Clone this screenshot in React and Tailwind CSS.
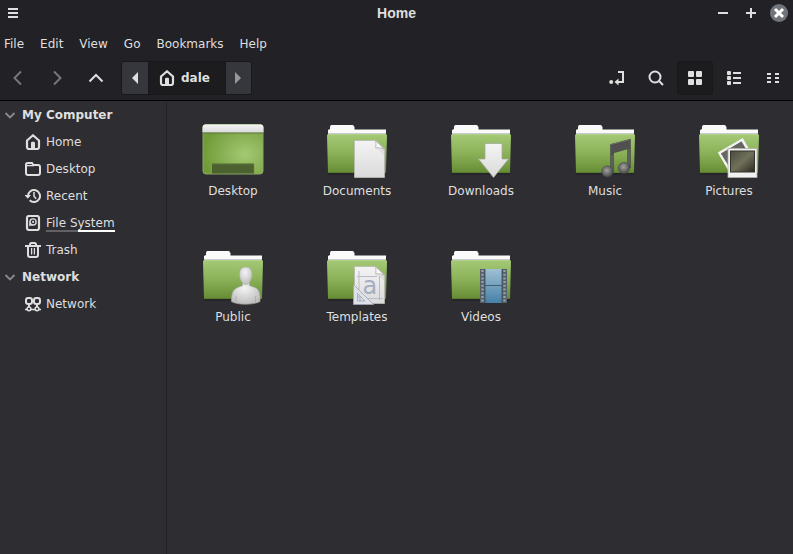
import React, { useState } from "react";

function Icon({ children, className = "size-4" }) {
  return (
    <svg viewBox="0 0 16 16" className={className} fill="none" stroke="currentColor" strokeWidth="2" aria-hidden="true">
      {children}
    </svg>
  );
}

const HomeIcon = () => (
  <Icon>
    <path d="M2 6.500 8 1.200l6 5.300V13a2 2 0 0 1-2 2H4a2 2 0 0 1-2-2z" strokeWidth="2.200" strokeLinejoin="round" />
    <path d="M6 15V9a1.200 1.200 0 0 1 1.200-1.200h1.600A1.200 1.200 0 0 1 10 9v6z" fill="currentColor" stroke="none" />
  </Icon>
);

const FolderIcon = () => (
  <Icon>
    <path d="M1 12V3.500A1.500 1.500 0 0 1 2.500 2H7l1.500 2H13a2 2 0 0 1 2 2v6a2 2 0 0 1-2 2H3a2 2 0 0 1-2-2z" strokeWidth="2" />
    <path d="M1 4.600h8" strokeWidth="1.400" />
  </Icon>
);

const RecentIcon = () => (
  <Icon>
    <path d="M3 8a6 6 0 1 1 1.700 4.200" />
    <path d="M-.5 7h6.500L2.800 10.800z" fill="currentColor" stroke="none" />
    <path d="M9 4v4.300l2.200 2.500" strokeWidth="1.500" />
  </Icon>
);

const DiskIcon = () => (
  <Icon>
    <rect x="2" y="1" width="12" height="14" rx="2" strokeWidth="2.200" />
    <path d="M4.200 11.400V7A3.800 3.800 0 1 1 8 10.800H5z" fill="currentColor" stroke="none" />
    <circle cx="8.100" cy="6.900" r="1.700" stroke="#2e2d32" strokeWidth="1.300" fill="currentColor" />
  </Icon>
);

const TrashIcon = () => (
  <Icon>
    <path d="M0 4h16M5 3.500V2.500A1.500 1.500 0 0 1 6.500 1h3A1.500 1.500 0 0 1 11 2.500v1" />
    <path d="M3 4v9a2 2 0 0 0 2 2h6a2 2 0 0 0 2-2V4" />
    <path d="M6.600 6v6.500M9.400 6v6.500" strokeWidth="1.300" />
  </Icon>
);

const NetworkIcon = () => (
  <Icon>
    <rect x="1" y="2" width="6" height="6" rx="2.200" />
    <rect x="9" y="2" width="6" height="6" rx="2.200" />
    <path d="M4 8v3M12 8v3" />
    <path d="M0 13.500h2.500M6 13.500h4M13.500 13.500H16" strokeWidth="1.600" />
    <circle cx="4" cy="12.800" r="1.900" strokeWidth="1.500" />
    <circle cx="12" cy="12.800" r="1.900" strokeWidth="1.500" />
  </Icon>
);

const LocationIcon = () => (
  <Icon>
    <path d="M9 2h5v10H8" />
    <path d="m5.500 12 4-3.500v7z" fill="currentColor" stroke="none" />
    <circle cx="2.200" cy="12" r="2" fill="currentColor" stroke="none" />
  </Icon>
);

const SearchIcon = () => (
  <Icon>
    <circle cx="7" cy="7" r="5.500" />
    <path d="m11 11 4 4" />
  </Icon>
);

const GridIcon = () => (
  <Icon>
    <g fill="currentColor" stroke="none">
      <rect x="1" y="1" width="6" height="6" rx="1" />
      <rect x="9" y="1" width="6" height="6" rx="1" />
      <rect x="1" y="9" width="6" height="6" rx="1" />
      <rect x="9" y="9" width="6" height="6" rx="1" />
    </g>
  </Icon>
);

const ListIcon = () => (
  <Icon>
    <g fill="currentColor" stroke="none">
      <rect x="1" y="1" width="4" height="4" rx="1" />
      <rect x="1" y="6" width="4" height="4" rx="1" />
      <rect x="1" y="11" width="4" height="4" rx="1" />
    </g>
    <path d="M7 3h8M7 8h8M7 13h8" />
  </Icon>
);

const CompactIcon = () => (
  <Icon>
    <path d="M2 4h4M2 8h4M2 12h4M10 4h4M10 8h4M10 12h4" />
  </Icon>
);

function Gradients() {
  return (
    <svg className="absolute size-0" aria-hidden="true">
      <defs>
        <linearGradient id="green" x1="0" y1="0" x2="0" y2="1">
          <stop offset="0" stopColor="#a5c976" />
          <stop offset="0.500" stopColor="#8bb158" />
          <stop offset="1" stopColor="#658c34" />
        </linearGradient>
        <radialGradient id="desk" cx="0.700" cy="0.600" r="0.700">
          <stop offset="0" stopColor="#a4c974" />
          <stop offset="1" stopColor="#719b38" />
        </radialGradient>
        <linearGradient id="paper" x1="0" y1="0" x2="0" y2="1">
          <stop offset="0" stopColor="#f4f4f4" />
          <stop offset="1" stopColor="#dadada" />
        </linearGradient>
        <linearGradient id="photo" x1="0" y1="0" x2="1" y2="1">
          <stop offset="0" stopColor="#4b4a3f" />
          <stop offset="0.500" stopColor="#70715a" />
          <stop offset="1" stopColor="#2c2720" />
        </linearGradient>
        <linearGradient id="film" x1="0" y1="0" x2="0" y2="1">
          <stop offset="0" stopColor="#a0c0d4" />
          <stop offset="1" stopColor="#4680a6" />
        </linearGradient>
        <radialGradient id="note" cx="0.450" cy="0.400" r="0.600">
          <stop offset="0" stopColor="#a2a2a2" />
          <stop offset="1" stopColor="#484848" />
        </radialGradient>
        <radialGradient id="person" cx="0.450" cy="0.300" r="0.800">
          <stop offset="0" stopColor="#f4f4f4" />
          <stop offset="1" stopColor="#b5b5b5" />
        </radialGradient>
      </defs>
    </svg>
  );
}

function BigIcon({ children }) {
  return (
    <svg viewBox="0 0 64 64" className="size-16" aria-hidden="true">
      {children}
    </svg>
  );
}

function DesktopArt() {
  return (
    <BigIcon>
      <rect x="2" y="5.500" width="60" height="49.500" rx="3" fill="url(#desk)" stroke="#8aa864" />
      <path d="M1.500 13.500V8.500a3 3 0 0 1 3-3h55a3 3 0 0 1 3 3v5z" fill="url(#paper)" />
      <path d="M1.500 14h61" stroke="#55653e" strokeOpacity="0.700" />
      <path d="M11 44.500h42V54.500H11z" fill="#4b6130" />
      <path d="M11 45h42V54.500" fill="none" stroke="#6f8c49" strokeOpacity="0.500" />
    </BigIcon>
  );
}

function FolderArt({ children }) {
  return (
    <BigIcon>
      <path d="M3 55h58" stroke="#1c1c1e" strokeOpacity="0.500" strokeWidth="1.500" />
      <path d="M3 16v-5l2-1V7.500L6 6h22l1.500 2v2.500H61V16z" fill="#fafafa" />
      <path d="M3 14.500h58" stroke="#c9c9cf" strokeWidth="1" />
      <path d="M2 16.500q0-1.500 1.500-1.500h57q1.500 0 1.500 1.500L61 53.200a.8.8 0 0 1-.8.8H3.800A.8.8 0 0 1 3 53.200z" fill="url(#green)" />
      <path d="M3 15.700h58" stroke="#bcd996" strokeOpacity="0.600" />
      <path d="M3.500 53.500h57" stroke="#587b2e" />
      {children}
    </BigIcon>
  );
}

const Paper = () => (
  <>
    <path d="M29.500 21.500H51L59.500 30v28.500h-30z" fill="url(#paper)" stroke="#b9b9b4" strokeWidth="0.800" />
    <path d="M50 29.500h9.500V38q-2-6-9.500-8.500z" fill="#cfcfcf" fillOpacity="0.500" />
    <path d="M50.500 21.500q1 3 .2 7.300 5-.6 8.800 1.400z" fill="#fbfbfb" stroke="#a9a9a4" strokeWidth="0.800" />
  </>
);

const DocumentsArt = () => (
  <FolderArt>
    <Paper />
  </FolderArt>
);

const DownloadsArt = () => (
  <FolderArt>
    <path d="M36 24.500h17V40h6.500L44.500 58.500 29.500 40H36z" fill="url(#paper)" stroke="#a6aa9c" strokeWidth="0.800" />
  </FolderArt>
);

const MusicArt = () => (
  <FolderArt>
    <path d="M39 53V26.500L56 22v27" fill="none" stroke="#4a4a4a" strokeWidth="3.500" />
    <path d="M38 27 57 22.200V29.500L38 35z" fill="#505050" />
    <path d="M37.500 25.700 57.500 20.800" stroke="#6c6c6c" />
    <path d="M39 36v15M56 30v16" stroke="#777" strokeWidth="0.900" />
    <circle cx="34.300" cy="52.500" r="5.600" fill="url(#note)" stroke="#454545" strokeWidth="0.600" />
    <circle cx="51" cy="49" r="5.600" fill="url(#note)" stroke="#454545" strokeWidth="0.600" />
  </FolderArt>
);

const PicturesArt = () => (
  <FolderArt>
    <path d="M20.800 33.500 45.800 19 60 44 35 58z" fill="#f2f2f2" />
    <path d="M24 34.500 44.500 22.500 56 42 36 54z" fill="#555551" />
    <path d="M24 34.500 44.500 22.500 47 27 34 45 29 43z" fill="#777" fillOpacity="0.500" />
    <rect x="31" y="29.500" width="29" height="29" fill="#f1f1f1" stroke="#aeb2a5" strokeWidth="0.800" />
    <rect x="33.500" y="32" width="24" height="21" fill="url(#photo)" stroke="#33322c" />
  </FolderArt>
);

const PublicArt = () => (
  <FolderArt>
    <path d="M30.500 56.500q-.5-12 6-14l5-2v-4h7v4l5.500 2q6 2 5 14-5 2.700-14.500 2.700t-14-2.700z" fill="url(#person)" stroke="#a0a59a" strokeWidth="0.700" />
    <path d="M35 58v-7M54.500 58v-7" stroke="#a5a5a5" strokeWidth="0.700" />
    <path d="M44.700 22c4.500 0 6.500 3 6.300 8-.2 4.500-3 9.500-6.300 9.500S38.700 34.500 38.500 30c-.2-5 1.700-8 6.200-8z" fill="url(#person)" stroke="#a8ada0" strokeWidth="0.600" />
  </FolderArt>
);

const TemplatesArt = () => (
  <FolderArt>
    <Paper />
    <path d="M34 26v24M54.500 31v24M32 31.500h20M40 53.500h18" stroke="#b3b8c6" strokeWidth="0.900" />
    <text x="37.500" y="48.500" fontSize="24" fill="#a5adc2" fontFamily="'DejaVu Sans', sans-serif">a</text>
    <path d="M28.500 39.500v20h20zM32.500 48.500v7.500h7.500z" fill="#dde0e9" fillRule="evenodd" stroke="#9da4b8" strokeWidth="0.800" />
    <path d="M35 52.500v3.500M32.500 52h3.500" stroke="#9da4b8" strokeWidth="0.800" />
  </FolderArt>
);

const VideosArt = () => (
  <FolderArt>
    <rect x="31" y="24" width="27" height="34" fill="#55606a" />
    <rect x="36" y="24" width="17" height="34" fill="url(#film)" />
    <path d="M36 40.500h17" stroke="#3e617a" />
    <path d="M36 24v34M53 24v34" stroke="#33495a" strokeWidth="0.800" />
    <path d="M33.500 25v33M55.500 25v33" stroke="#98a1a6" strokeWidth="2.400" strokeDasharray="2 1.700" />
  </FolderArt>
);

const menus = ["File", "Edit", "View", "Go", "Bookmarks", "Help"];

const places = [
  {
    title: "My Computer",
    items: [
      { name: "Home", icon: HomeIcon },
      { name: "Desktop", icon: FolderIcon },
      { name: "Recent", icon: RecentIcon },
      { name: "File System", icon: DiskIcon, used: 46 },
      { name: "Trash", icon: TrashIcon },
    ],
  },
  { title: "Network", items: [{ name: "Network", icon: NetworkIcon }] },
];

const folders = [
  { name: "Desktop", art: DesktopArt },
  { name: "Documents", art: DocumentsArt },
  { name: "Downloads", art: DownloadsArt },
  { name: "Music", art: MusicArt },
  { name: "Pictures", art: PicturesArt },
  { name: "Public", art: PublicArt },
  { name: "Templates", art: TemplatesArt },
  { name: "Videos", art: VideosArt },
];

const views = [
  { id: "icons", label: "Icon view", icon: GridIcon },
  { id: "list", label: "List view", icon: ListIcon },
  { id: "compact", label: "Compact view", icon: CompactIcon },
];

function ToolButton({ label, active, children, ...props }) {
  return (
    <button
      type="button"
      aria-label={label}
      className={`flex h-[34px] w-9 items-center justify-center rounded-[3px] border disabled:text-[#77777a] ${
        active ? "border-[#19191b] bg-[#1c1c1e]" : "border-transparent"
      }`}
      {...props}
    >
      {children}
    </button>
  );
}

function PlaceGroup({ title, items }) {
  const [open, setOpen] = useState(true);

  return (
    <section>
      <button type="button" onClick={() => setOpen(!open)} aria-expanded={open} className="flex h-[27px] w-full items-center gap-1.5 pl-1 font-bold">
        <svg viewBox="0 0 12 12" className="size-3 text-[#8a8a8d]" fill="none" stroke="currentColor" strokeWidth="1.800" aria-hidden="true">
          <path d="m1.500 4 4.500 4.500L10.500 4" />
        </svg>
        {title}
      </button>
      {open && (
        <ul>
          {items.map(({ name, icon: PlaceIcon, used }) => (
            <li key={name}>
              <a href="#" className="flex h-[27px] items-center gap-[5px] pl-[25px]">
                <PlaceIcon />
                <span className="relative">
                  {name}
                  {used && (
                    <span className="absolute inset-x-0 -bottom-px flex h-0.5 bg-white">
                      <span className="bg-[#626266]" style={{ width: `${used}%` }} />
                    </span>
                  )}
                </span>
              </a>
            </li>
          ))}
        </ul>
      )}
    </section>
  );
}

export default function App() {
  const [view, setView] = useState("icons");

  return (
    <div className="flex min-h-screen flex-col bg-[#2e2d32] font-['DejaVu_Sans',sans-serif] text-[12px] leading-4 text-[#dfdfdf]">
      <Gradients />
      <header className="border-b border-black bg-[#222226]">
        <div className="grid h-[26px] grid-cols-[1fr_auto_1fr] items-center px-[5px]">
          <button type="button" aria-label="Window menu" className="justify-self-start px-[3px]">
            <svg viewBox="0 0 10 10" className="size-2.5" fill="currentColor" aria-hidden="true">
              <path d="M0 0h10v2H0zM0 4h10v2H0zM0 8h10v2H0z" />
            </svg>
          </button>
          <h1 className="font-['Liberation_Sans',sans-serif] text-[14px] font-bold">Home</h1>
          <div className="flex gap-2.5 justify-self-end">
            <button type="button" aria-label="Minimize" className="size-[18px]">
              <svg viewBox="0 0 18 18" stroke="currentColor" strokeWidth="2" aria-hidden="true">
                <path d="M4 9h10" />
              </svg>
            </button>
            <button type="button" aria-label="Maximize" className="size-[18px]">
              <svg viewBox="0 0 18 18" stroke="currentColor" strokeWidth="2" aria-hidden="true">
                <path d="M4 9h10M9 4v10" />
              </svg>
            </button>
            <button type="button" aria-label="Close" className="size-[18px] rounded-full bg-[#72747d] text-white">
              <svg viewBox="0 0 18 18" stroke="currentColor" strokeWidth="3" aria-hidden="true">
                <path d="m5 5 8 8M13 5l-8 8" />
              </svg>
            </button>
          </div>
        </div>

        <nav className="flex h-[35px] items-center gap-4 px-1">
          {menus.map((menu) => (
            <button type="button" key={menu}>
              {menu}
            </button>
          ))}
        </nav>

        <div className="flex items-center justify-between pr-0.5 pb-[5px]">
          <div className="flex gap-[3px]">
            <ToolButton label="Back" disabled>
              <Icon>
                <path d="M11 1.500 4.500 8l6.500 6.500" />
              </Icon>
            </ToolButton>
            <ToolButton label="Forward" disabled>
              <Icon>
                <path d="M5 1.500 11.500 8 5 14.500" />
              </Icon>
            </ToolButton>
            <ToolButton label="Up">
              <Icon>
                <path d="M1.500 11.500 8 5l6.500 6.500" />
              </Icon>
            </ToolButton>
            <div className="ml-1 flex h-[34px] divide-x divide-[#18181a] overflow-hidden rounded-[3px] border border-[#18181a] bg-[#36373c]">
              <button type="button" aria-label="Previous folder" className="flex w-[27px] items-center justify-center">
                <svg viewBox="0 0 6 12" className="h-3 w-1.5" fill="currentColor" aria-hidden="true">
                  <path d="M6 0v12L0 6z" />
                </svg>
              </button>
              <button type="button" className="flex items-center gap-1.5 bg-[#1c1c1e] pr-[15px] pl-2.5 font-bold">
                <HomeIcon />
                dale
              </button>
              <button type="button" aria-label="Next folder" className="flex w-[25px] items-center justify-center text-[#98989a]">
                <svg viewBox="0 0 6 12" className="h-3 w-1.5" fill="currentColor" aria-hidden="true">
                  <path d="M0 0v12l6-6z" />
                </svg>
              </button>
            </div>
          </div>
          <div className="flex gap-[3px]">
            <ToolButton label="Toggle location entry">
              <LocationIcon />
            </ToolButton>
            <ToolButton label="Search">
              <SearchIcon />
            </ToolButton>
            {views.map(({ id, label, icon: ViewIcon }) => (
              <ToolButton key={id} label={label} active={view === id} onClick={() => setView(id)}>
                <ViewIcon />
              </ToolButton>
            ))}
          </div>
        </div>
      </header>

      <div className="flex grow">
        <aside className="w-[167px] shrink-0 border-r border-[#222226]">
          {places.map((group) => (
            <PlaceGroup key={group.title} {...group} />
          ))}
        </aside>
        <main className="grow pt-[18px] pl-1">
          <ul className="grid grid-cols-[repeat(auto-fill,124px)] gap-y-[46px]">
            {folders.map(({ name, art: Art }) => (
              <li key={name}>
                <a href="#" className="flex flex-col items-center">
                  <Art />
                  {name}
                </a>
              </li>
            ))}
          </ul>
        </main>
      </div>
    </div>
  );
}
